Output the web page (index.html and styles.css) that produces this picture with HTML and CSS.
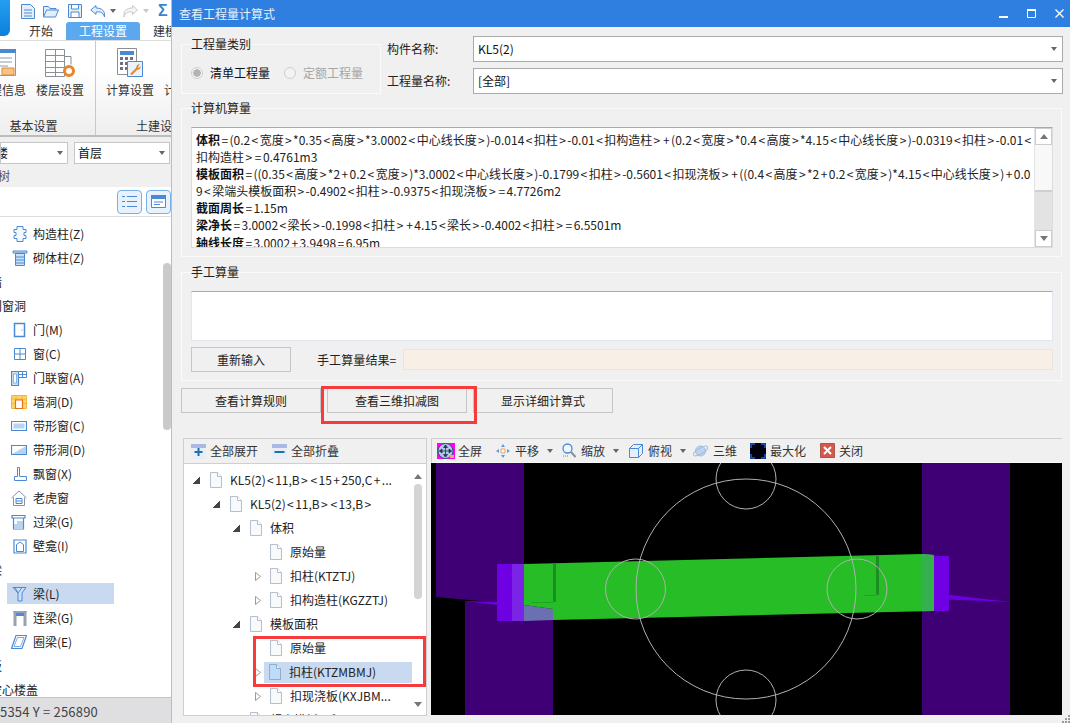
FILE: index.html
```html
<!DOCTYPE html>
<html lang="zh-CN">
<head>
<meta charset="utf-8">
<title>查看工程量计算式</title>
<link rel="stylesheet" href="styles.css">
</head>
<body>
<svg class="defs" width="0" height="0">
  <symbol id="doc" viewBox="0 0 12 16">
    <path d="M.5.5h7l4 4v11H.5z" fill="#f8f9fb" stroke="#b4bfcd"/>
    <path d="M7.5.5v4h4" fill="#fff" stroke="#b4bfcd"/>
  </symbol>
  <symbol id="docsel" viewBox="0 0 12 16">
    <path d="M.5.5h7l4 4v11H.5z" fill="#bcdcfa" stroke="#8eaed0"/>
    <path d="M7.5.5v4h4" fill="#e6f2fd" stroke="#8eaed0"/>
  </symbol>
  <symbol id="shut" viewBox="0 0 6 9">
    <path d="M.5.5 5.500 4.500.5 8.500z" fill="#fff" stroke="#9a9a9a"/>
  </symbol>
</svg>
<div class="app">
  <aside class="left">
    <div class="logo"></div>
    <div class="qat">
      <svg width="14" height="15" viewBox="0 0 14 15"><path d="M.5.5h9l4 4v10H.5z" fill="#e4effa" stroke="#4a8ad4"/><path d="M3 6h8M3 9h8M3 12h8" stroke="#4a8ad4"/></svg>
      <svg class="q1" width="16" height="14" viewBox="0 0 16 14"><path d="M.5 13V2.500h5l1.500 2h6V6M.5 13l3-7h12l-3 7z" fill="#e4effa" stroke="#4a8ad4"/></svg>
      <svg class="q2" width="14" height="14" viewBox="0 0 14 14"><path d="M.5.5h13v13H.5z" fill="#e4effa" stroke="#4a8ad4"/><path d="M3.500 1v4h7V1M3 13V8h8v5" fill="#fff" stroke="#4a8ad4"/></svg>
      <svg class="q3" width="16" height="13" viewBox="0 0 16 13"><path d="M6 .5.800 5 6 9.500V7c4-.5 7 0 8.500 5 .8-6-2.500-9-8.500-9z" fill="#e4effa" stroke="#4a8ad4"/></svg>
      <i class="caret dark q4"></i>
      <svg class="q5" width="15" height="13" viewBox="0 0 15 13"><path d="M9.500.5 14.500 5l-5 4.500V7c-4-.5-7 0-8.500 5C.2 6 3.500 3 9.500 3z" fill="#f5f5f5" stroke="#c8c8c8"/></svg>
      <i class="caret light q6"></i>
      <span class="sigma">Σ</span>
    </div>
    <div class="tabs">
      <span class="tab">开始</span>
      <span class="tab on">工程设置</span>
      <span class="tab">建模</span>
    </div>
    <div class="ribbon">
      <div class="rgroup first">
        <div class="ritems">
          <div class="ritem">
            <svg width="48" height="30" viewBox="0 0 48 30"><path d="M10.500 1.500h27v26h-27z" fill="#fff" stroke="#8a9aac"/><path d="M10 1h28v4H10z" fill="#4a8ad4"/><path d="M20 10h14M20 14h14M20 18h10" stroke="#8a9aac"/><path d="M24 20h12v7H24z" fill="#f4c48c" stroke="#e58a2c"/></svg>
            <span>工程信息</span>
          </div>
          <div class="ritem">
            <svg width="32" height="30" viewBox="0 0 32 30"><path d="M1.500 1.500h19v27h-19zM1.500 7.500h19M1.500 13.500h19M1.500 19.500h19M1.500 24.500h19M11.500 1.500v27" fill="#fff" stroke="#8a8f96"/><path d="M20 8.500h7v8" fill="none" stroke="#8a8f96"/><circle cx="25" cy="23" r="4.500" fill="#fff" stroke="#e8862a" stroke-width="3"/></svg>
            <span>楼层设置</span>
          </div>
        </div>
        <div class="rlabel">基本设置</div>
      </div>
      <div class="rgroup second">
        <div class="ritems">
          <div class="ritem">
            <svg width="26" height="30" viewBox="0 0 26 30"><path d="M.5.500h19v26H.5z" fill="#fff" stroke="#8a8f96"/><path d="M3 3h14v4H3z" fill="#4a8ad4"/><path d="M3 9h3v3H3zM8 9h3v3H8zM13 9h3v3h-3zM3 14h3v3H3zM8 14h3v3H8zM3 19h3v3H3zM8 19h3v3H8z" fill="#6c7280"/><path d="M10.500 13.500h15v15h-15z" fill="#eaf3fc" stroke="#4a8ad4"/><path d="M13 26l6-6 1-3 3-1-2 3 1 1 2-2-1 3-3 1-5 5z" fill="#e8862a"/></svg>
            <span>计算设置</span>
          </div>
          <div class="ritem"><svg width="26" height="30" viewBox="0 0 26 30"></svg><span>计算规则</span></div>
        </div>
        <div class="rlabel">土建设置</div>
      </div>
    </div>
    <div class="selects">
      <div class="lsel a"><span class="lsel-t">楼</span><i class="caret dark"></i></div>
      <div class="lsel b"><span>首层</span><i class="caret dark"></i></div>
    </div>
    <div class="treehead"><span>导航树</span></div>
    <div class="treetools">
      <span class="tbtn"><svg width="15" height="13" viewBox="0 0 15 13"><path d="M0 1.500h3M5 1.500h10M0 6.500h3M5 6.500h10M0 11.500h3M5 11.500h10" stroke="#4a8ad4"/></svg></span>
      <span class="tbtn"><svg width="15" height="13" viewBox="0 0 15 13"><path d="M.5.500h14v12H.5z" fill="#fff" stroke="#4a8ad4"/><path d="M0 0h15v4H0z" fill="#4a8ad4"/><path d="M3 7h9M3 9.500h6" stroke="#4a8ad4"/></svg></span>
    </div>
    <div class="nav">
      <div class="nav-list">
        <div class="item"><svg width="16" height="16" viewBox="0 0 16 16"><path d="M5 .5h6v3h3v3h-2v3h2v3h-3v3H5v-3H2v-3h2v-3H2v-3h3z" fill="#f4f8fd" stroke="#4a8ad4"/></svg><span>构造柱(Z)</span></div>
        <div class="item"><svg width="16" height="16" viewBox="0 0 16 16"><path d="M1 1h14v2H1zM3.500 3.500h9v12h-9z" fill="#cfe0f4" stroke="#4a8ad4"/><path d="M4 7h8M4 10h8M4 13h8" stroke="#4a8ad4"/></svg><span>砌体柱(Z)</span></div>
        <div class="group">墙</div>
        <div class="group">门窗洞</div>
        <div class="item"><svg width="16" height="16" viewBox="0 0 16 16"><path d="M1.500 1.500h10v13h-10z" transform="translate(1)" fill="#fff" stroke="#4a8ad4" stroke-width="1.500"/><path d="M9.500 7.500h1v1h-1z" fill="#4a8ad4"/></svg><span>门(M)</span></div>
        <div class="item"><svg width="16" height="16" viewBox="0 0 16 16"><path d="M2.500 2.500h11v11h-11zM8 2.500v11M2.500 8h11" fill="#fff" stroke="#4a8ad4"/></svg><span>窗(C)</span></div>
        <div class="item wide"><svg width="16" height="16" viewBox="0 0 16 16"><path d="M.5 1.500h7v14h-7z" fill="#cfe0f4" stroke="#4a8ad4" stroke-width="1.200"/><path d="M2.500 4h3v9h-3z" fill="#fff" stroke="#4a8ad4" stroke-width=".6"/><path d="M7.500 1.500h8v6h-8zM11.500 1.500v6M7.500 4.500h8" fill="#fff" stroke="#4a8ad4"/></svg><span>门联窗(A)</span></div>
        <div class="item wide"><svg width="16" height="16" viewBox="0 0 16 16"><path d="M.5 1.500h15v13H.5z" fill="#ffd56a" stroke="#f2b63c"/><path d="M.5 5h15M.5 9.500h3M12.500 9.500h3M5 1.500V5M11 1.500V5" stroke="#f2b63c"/><path d="M4.500 6h7v8.500h-7z" fill="#fff" stroke="#e5701e" stroke-width="1.200"/></svg><span>墙洞(D)</span></div>
        <div class="item wide"><svg width="16" height="16" viewBox="0 0 16 16"><path d="M.5 3.500h15v9H.5z" fill="#fff" stroke="#4a8ad4" stroke-width="1.200"/><path d="M2.500 5.500h11v5h-11z" fill="#b9d2ee"/></svg><span>带形窗(C)</span></div>
        <div class="item wide"><svg width="16" height="16" viewBox="0 0 16 16"><path d="M.5 3.500h15v9H.5z" fill="#fff" stroke="#4a8ad4" stroke-width="1.200"/><path d="M1 12 15 4v8z" fill="#b9d2ee"/></svg><span>带形洞(D)</span></div>
        <div class="item"><svg width="16" height="16" viewBox="0 0 16 16"><path d="M5.500 1.500h2v9h7v4h-12v-4h3z" fill="#fff" stroke="#4a8ad4"/></svg><span>飘窗(X)</span></div>
        <div class="item wide"><svg width="16" height="16" viewBox="0 0 16 16"><path d="M.5 8 8 1l7.500 7M2.500 7.500v8h11v-8" fill="none" stroke="#8a939d"/><path d="M5 8.500h6v5H5zM5 11h6" fill="#fff" stroke="#4a8ad4"/></svg><span>老虎窗</span></div>
        <div class="item wide"><svg width="16" height="16" viewBox="0 0 16 16"><path d="M1 1.500h13v2.500H1zM2.500 4v11h10V4" fill="#fff" stroke="#4a8ad4" stroke-width="1.200"/><path d="M3 15V10h3V7h6v8z" fill="#b9d2ee"/></svg><span>过梁(G)</span></div>
        <div class="item"><svg width="16" height="16" viewBox="0 0 16 16"><path d="M2 2h12v13H2z" fill="#fff" stroke="#4a8ad4" stroke-width="1.200"/><path d="M4.500 13.500v-7L8 4l3.500 2.500v7z" fill="#fff" stroke="#4a8ad4"/></svg><span>壁龛(I)</span></div>
        <div class="group">梁</div>
        <div class="item sel"><svg width="16" height="16" viewBox="0 0 16 16"><path d="M1 1.500h13L10 7v8H6V7z" fill="#cfe0f4" stroke="#4a8ad4"/><path d="M6 7l4-5.500M6 7 3 1.500" stroke="#4a8ad4" fill="none"/></svg><span>梁(L)</span></div>
        <div class="item"><svg width="16" height="16" viewBox="0 0 16 16"><path d="M1.500 1h3v15h-3zM11.500 1h3v15h-3z" fill="#9aa3ad"/><path d="M1.500 1h13v2h-13z" fill="#9aa3ad"/><path d="M4 3h8v3H4z" fill="#4a8ad4"/></svg><span>连梁(G)</span></div>
        <div class="item wide"><svg width="16" height="16" viewBox="0 0 16 16"><path d="M5 1.500h10.500L11 14.500H.5z" fill="#fff" stroke="#4a8ad4" stroke-width="1.200"/><path d="M6.500 3.500h6.500L9.500 12.500H3z" fill="#fff" stroke="#4a8ad4" stroke-width=".7"/></svg><span>圈梁(E)</span></div>
        <div class="group">板</div>
        <div class="group">空心楼盖</div>
      </div>
      <div class="nav-thumb"></div>
    </div>
    <div class="status">5354 Y = 256890</div>
  </aside>

  <main class="dialog">
    <header class="title">
      <span>查看工程量计算式</span>
      <div class="winbtns">
        <svg width="9" height="9" viewBox="0 0 9 9"><path d="M0 7h9v2H0z" fill="#fff"/></svg>
        <svg width="9" height="9" viewBox="0 0 9 9"><path d="M.5 1h8v7.500h-8z" fill="none" stroke="#fff"/><path d="M0 0h9v2H0z" fill="#fff"/></svg>
        <svg width="9" height="9" viewBox="0 0 9 9"><path d="M.5.500l8 8M8.500.500l-8 8" stroke="#fff" stroke-width="1.300"/></svg>
      </div>
    </header>

    <div class="row-top">
      <fieldset class="fs type">
        <legend>工程量类别</legend>
        <div class="radios">
          <i class="radio on"></i><span>清单工程量</span>
          <i class="radio off"></i><span class="muted">定额工程量</span>
        </div>
      </fieldset>
      <label class="flabel">构件名称:</label>
      <div class="combo"><span>KL5(2)</span><i class="caret dark"></i></div>
      <label class="flabel">工程量名称:</label>
      <div class="combo"><span>[全部]</span><i class="caret dark"></i></div>
    </div>

    <fieldset class="fs calc">
      <legend>计算机算量</legend>
      <div class="calc-box">
        <div class="calc-text">
          <div><b>体积</b><span class="o">=</span>(0.2<span class="o">&lt;</span>宽度<span class="o">&gt;</span>*0.35<span class="o">&lt;</span>高度<span class="o">&gt;</span>*3.0002<span class="o">&lt;</span>中心线长度<span class="o">&gt;</span>)-0.014<span class="o">&lt;</span>扣柱<span class="o">&gt;</span>-0.01<span class="o">&lt;</span>扣构造柱<span class="o">&gt;</span><span class="o">+</span>(0.2<span class="o">&lt;</span>宽度<span class="o">&gt;</span>*0.4<span class="o">&lt;</span>高度<span class="o">&gt;</span>*4.15<span class="o">&lt;</span>中心线长度<span class="o">&gt;</span>)-0.0319<span class="o">&lt;</span>扣柱<span class="o">&gt;</span>-0.01<span class="o">&lt;</span></div>
          <div>扣构造柱<span class="o">&gt;</span><span class="o">=</span>0.4761m3</div>
          <div><b>模板面积</b><span class="o">=</span>((0.35<span class="o">&lt;</span>高度<span class="o">&gt;</span>*2<span class="o">+</span>0.2<span class="o">&lt;</span>宽度<span class="o">&gt;</span>)*3.0002<span class="o">&lt;</span>中心线长度<span class="o">&gt;</span>)-0.1799<span class="o">&lt;</span>扣柱<span class="o">&gt;</span>-0.5601<span class="o">&lt;</span>扣现浇板<span class="o">&gt;</span><span class="o">+</span>((0.4<span class="o">&lt;</span>高度<span class="o">&gt;</span>*2<span class="o">+</span>0.2<span class="o">&lt;</span>宽度<span class="o">&gt;</span>)*4.15<span class="o">&lt;</span>中心线长度<span class="o">&gt;</span>)<span class="o">+</span>0.0</div>
          <div>9<span class="o">&lt;</span>梁端头模板面积<span class="o">&gt;</span>-0.4902<span class="o">&lt;</span>扣柱<span class="o">&gt;</span>-0.9375<span class="o">&lt;</span>扣现浇板<span class="o">&gt;</span><span class="o">=</span>4.7726m2</div>
          <div><b>截面周长</b><span class="o">=</span>1.15m</div>
          <div><b>梁净长</b><span class="o">=</span>3.0002<span class="o">&lt;</span>梁长<span class="o">&gt;</span>-0.1998<span class="o">&lt;</span>扣柱<span class="o">&gt;</span><span class="o">+</span>4.15<span class="o">&lt;</span>梁长<span class="o">&gt;</span>-0.4002<span class="o">&lt;</span>扣柱<span class="o">&gt;</span><span class="o">=</span>6.5501m</div>
          <div><b>轴线长度</b><span class="o">=</span>3.0002<span class="o">+</span>3.9498<span class="o">=</span>6.95m</div>
        </div>
        <div class="sb">
          <span class="sb-btn"><i class="tri up"></i></span>
          <span class="sb-thumb"></span>
          <span class="sb-track"></span>
          <span class="sb-btn"><i class="tri down"></i></span>
        </div>
      </div>
    </fieldset>

    <fieldset class="fs manual">
      <legend>手工算量</legend>
      <div class="manual-input"></div>
      <div class="manual-row">
        <button class="btn redo">重新输入</button>
        <span class="result-label">手工算量结果=</span>
        <div class="result"></div>
      </div>
    </fieldset>

    <div class="actions">
      <button class="btn act">查看计算规则</button>
      <button class="btn act">查看三维扣减图</button>
      <button class="btn act">显示详细计算式</button>
      <div class="mark mark-btn"></div>
    </div>

    <div class="lower">
      <section class="tree">
        <div class="tree-tools">
          <span class="tt"><svg width="15" height="15" viewBox="0 0 15 15"><path d="M0 0h15v15H0z" fill="#e9eef6"/><path d="M0 0h15v4H0z" fill="#a9b9e4"/><path d="M6.500 4h2v3h3v2h-3v3h-2V9h-3V7h3z" fill="#1a6fb5"/></svg>全部展开</span>
          <span class="tt"><svg width="15" height="15" viewBox="0 0 15 15"><path d="M0 0h15v15H0z" fill="#e9eef6"/><path d="M0 0h15v4H0z" fill="#a9b9e4"/><path d="M2.500 7h10v2h-10z" fill="#1a6fb5"/></svg>全部折叠</span>
        </div>
        <div class="tree-body">
          <div class="tree-list">
            <div class="node l0"><i class="ex open"></i><svg class="dic"><use href="#doc"/></svg><span>KL5(2)<span class="o">&lt;</span>11,B<span class="o">&gt;</span><span class="o">&lt;</span>15<span class="o">+</span>250,C<span class="o">+</span>...</span></div>
            <div class="node l1"><i class="ex open"></i><svg class="dic"><use href="#doc"/></svg><span>KL5(2)<span class="o">&lt;</span>11,B<span class="o">&gt;</span><span class="o">&lt;</span>13,B<span class="o">&gt;</span></span></div>
            <div class="node l2"><i class="ex open"></i><svg class="dic"><use href="#doc"/></svg><span>体积</span></div>
            <div class="node l3"><i class="ex"></i><svg class="dic"><use href="#doc"/></svg><span>原始量</span></div>
            <div class="node l3"><svg class="ex-shut"><use href="#shut"/></svg><svg class="dic"><use href="#doc"/></svg><span>扣柱(KTZTJ)</span></div>
            <div class="node l3"><svg class="ex-shut"><use href="#shut"/></svg><svg class="dic"><use href="#doc"/></svg><span>扣构造柱(KGZZTJ)</span></div>
            <div class="node l2"><i class="ex open"></i><svg class="dic"><use href="#doc"/></svg><span>模板面积</span></div>
            <div class="node l3"><i class="ex"></i><svg class="dic"><use href="#doc"/></svg><span>原始量</span></div>
            <div class="node l3"><svg class="ex-shut"><use href="#shut"/></svg><div class="picked"><svg class="dic"><use href="#docsel"/></svg><span>扣柱(KTZMBMJ)</span></div></div>
            <div class="node l3"><svg class="ex-shut"><use href="#shut"/></svg><svg class="dic"><use href="#doc"/></svg><span>扣现浇板(KXJBM...</span></div>
            <div class="node l2"><i class="ex"></i><svg class="dic"><use href="#doc"/></svg><span>超高模板面积</span></div>
          </div>
          <div class="tree-sb">
            <i class="tri up"></i>
            <span class="tree-thumb"></span>
            <i class="tri down"></i>
          </div>
          <div class="mark mark-tree"></div>
        </div>
      </section>

      <section class="view">
        <div class="view-tools">
          <span class="vt"><svg width="18" height="16" viewBox="0 0 18 16"><path d="M0 0h18v16H0z" fill="#f0f"/><circle cx="8.500" cy="8" r="7.500" fill="#b4c8e4" stroke="#2f4f7f"/><path d="M8.500 2v12M2.500 8h12M8.500 2l-2 2.500h4zM8.500 14l-2-2.500h4zM2.500 8 5 6v4zM14.500 8 12 6v4z" fill="#20355e" stroke="#20355e" stroke-width=".8"/><path d="M13 12h4v3h-4z" fill="#d8b84a"/></svg>全屏</span>
          <span class="vt g14 s5"><svg width="14" height="14" viewBox="0 0 14 14"><path d="M7 0l2 3H5zM7 14l2-3H5zM0 7l3-2v4zM14 7l-3-2v4z" fill="#5a9ce0"/><path d="M5 5h4v4H5z" fill="#fff" stroke="#f0a060"/></svg>平移<i class="caret dark c8"></i></span>
          <span class="vt g9 s5"><svg width="14" height="15" viewBox="0 0 14 15"><circle cx="5.500" cy="5.500" r="4.500" fill="#eef5fd" stroke="#4a8ad4" stroke-width="1.300"/><path d="M9 9l4.500 5" stroke="#8a8f96" stroke-width="2"/><path d="M1 13h6" stroke="#e06040" stroke-dasharray="1 1"/></svg>缩放<i class="caret dark c8"></i></span>
          <span class="vt g10 s5"><svg width="14" height="14" viewBox="0 0 14 14"><path d="M.5 4.500h9v9h-9zM.5 4.500l4-4h9v9l-4 4M9.500 4.500l4-4" fill="#e4effa" stroke="#4a8ad4"/></svg>俯视<i class="caret dark c8"></i></span>
          <span class="vt g7 s5"><svg width="15" height="14" viewBox="0 0 15 14"><circle cx="7.500" cy="7" r="5" fill="#bcd4f0" stroke="#9fbce0"/><ellipse cx="7.500" cy="7" rx="8" ry="2.800" transform="rotate(-30 7.500 7)" fill="none" stroke="#9fbce0"/></svg>三维</span>
          <span class="vt g13 s4"><svg width="16" height="16" viewBox="0 0 16 16"><path d="M0 0h16v16H0z" fill="#02020e"/><path d="M1 5V1h4M11 1h4v4M15 11v4h-4M5 15H1v-4" fill="none" stroke="#1560d8" stroke-width="1.500"/></svg>最大化</span>
          <span class="vt g14 s4"><svg width="15" height="15" viewBox="0 0 15 15"><path d="M.5.500h14v14H.5z" fill="#d9574a" stroke="#a8584c"/><path d="M4 4l7 7M11 4l-7 7" stroke="#fff" stroke-width="2"/></svg>关闭</span>
        </div>
        <svg class="scene" width="631" height="252" viewBox="431 464 631 252">
          <path class="sc-bg" d="M431 464h631v252H431z"/>
          <path class="sc-col" d="M436 464h88v142l-88-8z"/>
          <path class="sc-col" d="M465 602l59 4 29 4v106h-88z"/>
          <path class="sc-col" d="M922 464h88v252h-88z"/>
          <path class="sc-sliver" d="M465 602l32 1v3z"/>
          <path class="sc-sliver" d="M934 594l76 9-76-3z"/>
          <path class="sc-end" d="M497 565h27v57h-27z"/>
          <path class="sc-end2" d="M512 565h12v57h-12z"/>
          <path class="sc-pale" d="M524 606l29 4v11l-29 1z"/>
          <path class="sc-beam" d="M524 565l398-10 12 1v56l-381 9v-11l-29-4z"/>
          <path class="sc-dark" d="M553 565h3v38h-3zM876 557h3v39h-3z"/>
          <path class="sc-dark2" d="M531 603h22v1h-22zM864 596h12v1h-12z"/>
          <path class="sc-fade" d="M922 555l12 1v56l-12 .3z"/>
          <path class="sc-end" d="M934 557h15v55h-15z"/>
          <g class="sc-lines">
            <circle cx="746" cy="590" r="110"/>
            <circle cx="746" cy="480" r="30"/>
            <circle cx="746" cy="701" r="30"/>
            <circle cx="635.500" cy="590" r="30"/>
            <circle cx="857" cy="590" r="30"/>
          </g>
        </svg>
      </section>
    </div>
    <svg class="grip" width="8" height="8" viewBox="0 0 8 8"><path d="M6 0h2v2H6zM3 3h2v2H3zM6 3h2v2H6zM0 6h2v2H0zM3 6h2v2H3zM6 6h2v2H6z" fill="#9a9a9a"/></svg>
  </main>
</div>
</body>
</html>
```

FILE: styles.css
```css
* { box-sizing: border-box; }
html, body { margin: 0; padding: 0; height: 100%; overflow: hidden; }
body { font: 12px/16px "Noto Sans CJK SC", "Liberation Sans", sans-serif; color: #111; background: #f0f0f0; }
.defs { position: absolute; }
i { display: block; font-style: normal; }
svg { display: block; flex: none; }
.o { padding: 0 1.400px; }

.app { display: flex; width: 1070px; height: 723px; }

/* left application panel */
.left { width: 172px; height: 723px; flex: none; display: flex; flex-direction: column; overflow: hidden; background: #fff; border-right: 1px solid #bdbdbd; position: relative; }
.logo { position: absolute; left: -20px; top: -6px; width: 30px; height: 42px; border-radius: 6px; background: linear-gradient(#27a5f2, #0d7fdc); }
.qat { height: 22px; display: flex; align-items: center; padding-left: 21px; flex: none; }
.q1 { margin-left: 8px; } .q2 { margin-left: 9px; } .q3 { margin-left: 8px; } .q4 { margin-left: 4px; }
.q5 { margin-left: 7px; } .q6 { margin-left: 5px; }
.sigma { margin-left: 9px; font: 700 16px/16px "Liberation Sans", sans-serif; color: #3d83cf; }
.caret { width: 0; height: 0; border: 3px solid transparent; border-top: 4px solid #666; border-bottom: 0; flex: none; }
.caret.light { border-top-color: #c8c8c8; }
.tabs { height: 19px; display: flex; padding-left: 16px; flex: none; border-bottom: 1px solid #ddd; }
.tab { padding: 0 13px; line-height: 18px; color: #333; white-space: nowrap; flex: none; }
.tab.on { background: #5ba8ef; color: #fff; border-radius: 3px 3px 0 0; }
.ribbon { height: 96px; flex: none; display: flex; background: linear-gradient(#fff 30%, #eeeeee); border-bottom: 2px solid #bcbcbc; }
.rgroup { display: flex; flex-direction: column; flex: none; padding-top: 7px; }
.rgroup.first { width: 126px; margin-left: -30px; padding-left: 8px; border-right: 1px solid #c8c8c8; }
.rgroup.first .rlabel { margin-left: -6px; }
.rgroup.second { width: 128px; padding-left: 10px; }
.ritems { display: flex; gap: 10px; }
.ritem { width: 48px; display: flex; flex-direction: column; align-items: center; color: #333; flex: none; }
.ritem span { display: block; margin-top: 3px; line-height: 18px; white-space: nowrap; }
.rlabel { margin-top: auto; line-height: 18px; text-align: center; color: #333; white-space: nowrap; }
.rgroup.second .rlabel { margin-left: -10px; }
.selects { height: 28px; flex: none; display: flex; gap: 6px; align-items: center; background: #f0f0f0; padding-top: 4px; }
.lsel { height: 22px; display: flex; align-items: center; justify-content: space-between; background: #fff; border: 1px solid #c6c6c6; padding: 0 4px 0 3px; overflow: hidden; }
.lsel.a { width: 68px; } .lsel.b { width: 96px; }
.lsel-t { margin-left: -8px; }
.treehead { height: 22px; flex: none; background: #f0f0f0; color: #555; line-height: 22px; margin-left: -26px; padding-left: 0; }
.treetools { height: 30px; flex: none; display: flex; gap: 4px; justify-content: flex-end; align-items: center; border-bottom: 1px solid #ddd; background: #fff; }
.tbtn { width: 25px; height: 24px; display: flex; align-items: center; justify-content: center; background: #e8f2fc; border: 1px solid #7ab0e8; border-radius: 4px; }
.nav { flex: 1; position: relative; overflow: hidden; padding-top: 5px; }
.nav-list { display: flex; flex-direction: column; }
.item, .group { height: 24px; display: flex; align-items: center; white-space: nowrap; flex: none; color: #222; }
.item { padding-left: 12px; gap: 5px; }
.item.wide { padding-left: 11px; gap: 6px; }
.item.sel { position: relative; }
.item.sel::before { content: ""; position: absolute; left: 7px; width: 107px; top: 1px; bottom: 2px; background: #c8d9f0; z-index: 0; }
.item.sel > * { position: relative; z-index: 1; }
.group { margin-left: -10px; }
.nav-thumb { position: absolute; right: 0; top: 46px; width: 8px; height: 167px; border-radius: 4px; background: #cacaca; }
.status { height: 26px; flex: none; background: #dfdfe1; border-top: 1px solid #c4c4c4; line-height: 28px; color: #444; font-size: 13px; white-space: nowrap; letter-spacing: .2px; }

/* dialog */
.dialog { flex: 1; height: 723px; background: #f0f0f0; display: flex; flex-direction: column; position: relative; padding-left: 9px; }
.title { height: 27px; flex: none; margin-left: -9px; background: #2e7fe0; color: #e8f1fc; line-height: 27px; padding: 0 6px 0 7px; display: flex; justify-content: space-between; align-items: center; }
.winbtns { display: flex; gap: 19px; }
.fs { margin: 0; padding: 0; border: 1px solid #fafafa; min-width: 0; }
.fs legend { margin-left: 0; padding: 0; line-height: 16px; color: #222; height: 16px; }
.row-top { display: grid; grid-template-columns: 200px 92px 590px; grid-template-rows: 26px 26px; row-gap: 6px; margin-top: 9px; align-items: center; }
.type { grid-row: 1 / 3; height: 58px; padding-left: 9px; align-self: stretch; }
.radios { display: flex; align-items: center; margin-top: 13px; }
.radio { width: 12px; height: 12px; border-radius: 50%; border: 1px solid #cfcfcf; background: #f2f2f2; margin-right: 7px; flex: none; }
.radio.on { background: radial-gradient(circle, #b4b4b4 3.500px, #f4f4f4 4px); }
.radios span { margin-right: 14px; white-space: nowrap; }
.radios .muted { color: #a6a6a6; margin: 0; }
.flabel { padding-left: 6px; color: #222; grid-column: 2; }
.combo { grid-column: 3; height: 26px; display: flex; align-items: center; justify-content: space-between; background: #fff; border: 1px solid #aaa; padding: 0 5px 0 4px; }
.calc { width: 881px; height: 157px; margin-top: 6px; padding: 11px 8px 9px 9px; }
.calc-box { height: 121px; display: flex; background: #fff; border: 1px solid #dcdcdc; border-top-color: #aaa; overflow: hidden; }
.calc-text { flex: 1; padding: 3px 0 0 4px; line-height: 17.100px; white-space: nowrap; color: #222; overflow: hidden; }
.calc-text b { font-weight: 700; color: #111; }
.sb { width: 18px; flex: none; display: flex; flex-direction: column; border-left: 1px solid #e4e4e4; background: #f8f8f8; }
.sb-btn { height: 17px; flex: none; display: flex; align-items: center; justify-content: center; background: #fff; border: 1px solid #cdcdcd; }
.sb-thumb { height: 47px; flex: none; background: #f8f8f8; border-bottom: 2px solid #cfcfcf; }
.sb-track { flex: 1; background: #e3e3e3; }
.tri { width: 0; height: 0; border: 4px solid transparent; flex: none; }
.tri.up { border-top: 0; border-bottom: 5px solid #777; }
.tri.down { border-bottom: 0; border-top: 5px solid #777; }
.manual { width: 881px; height: 117px; margin-top: 7px; padding: 11px 8px 0 9px; }
.manual-input { height: 50px; background: #fff; border: 1px solid #e2e6ee; border-top-color: #aaa; }
.manual-row { display: flex; align-items: center; margin-top: 6px; height: 25px; }
.btn { font: inherit; color: #222; background: #f0f0f0; border: 1px solid #c6c6c6; padding: 0; }
.redo { width: 100px; height: 25px; flex: none; }
.result-label { margin-left: 26px; width: 86px; flex: none; color: #222; letter-spacing: .1px; }
.result { flex: 1; height: 21px; background: #f8efe6; border: 1px solid #eae5de; }
.actions { display: flex; gap: 6px; margin-top: 7px; position: relative; height: 25px; flex: none; }
.act { width: 140px; height: 25px; }
.mark { position: absolute; border: 3px solid #f53b3b; pointer-events: none; }
.mark-btn { left: 140px; top: -2px; width: 156px; height: 38px; }
.lower { display: flex; gap: 4px; margin-top: 25px; margin-left: 2px; height: 278px; flex: none; }
.tree { width: 244px; flex: none; display: flex; flex-direction: column; border: 1px solid #cfcfcf; background: #fff; }
.tree-tools { height: 25px; flex: none; background: #f0f0f0; display: flex; align-items: center; padding-left: 7px; gap: 14px; border-bottom: 1px solid #cfcfcf; }
.tt { display: flex; align-items: center; gap: 4px; color: #333; }
.tree-body { flex: 1; display: flex; position: relative; overflow: hidden; }
.tree-list { flex: 1; padding-top: 4px; overflow: hidden; min-width: 0; }
.node { height: 24px; display: flex; align-items: center; white-space: nowrap; color: #222; }
.node.l0 { padding-left: 9px; } .node.l1 { padding-left: 29px; } .node.l2 { padding-left: 49px; } .node.l3 { padding-left: 71px; }
.ex { width: 8px; height: 8px; flex: none; margin-right: 9px; }
.l3 .ex { width: 6px; margin-right: 9px; }
.ex.open { background: linear-gradient(135deg, transparent 49%, #444 50%); width: 7px; height: 7px; margin-right: 10px; }
.ex-shut { width: 6px; height: 9px; margin-right: 9px; }
.dic { width: 12px; height: 16px; margin-right: 8px; flex: none; }
.picked { display: flex; align-items: center; width: 148px; height: 21px; margin-left: -6px; padding-left: 5px; background: #c8d9f0; flex: none; }
.tree-sb { width: 14px; flex: none; display: flex; flex-direction: column; align-items: center; padding: 10px 2px 8px 0; }
.tree-thumb { width: 8px; height: 115px; margin-top: 5px; border-radius: 4px; background: #d4d4d4; flex: none; }
.tree-sb .tri.down { margin-top: auto; }
.mark-tree { left: 69px; top: 172px; width: 173px; height: 51px; }
.view { width: 631px; flex: none; display: flex; flex-direction: column; }
.view-tools { height: 25px; flex: none; display: flex; align-items: center; padding-left: 5px; background: #f0f0f0; border: 1px solid #cfcfcf; border-bottom: 1px solid #f8f8f8; border-right: 0; }
.vt { display: flex; align-items: center; gap: 3px; color: #333; white-space: nowrap; }
.s5 { gap: 5px; } .s4 { gap: 4px; }
.g7 { margin-left: 7px; } .g9 { margin-left: 9px; } .g10 { margin-left: 10px; } .g13 { margin-left: 13px; } .g14 { margin-left: 14px; }
.c8 { margin-left: 3px; }
.scene { flex: none; }
.sc-bg { fill: #000; }
.sc-col { fill: #3f0076; }
.sc-sliver { fill: #6a00dc; }
.sc-end { fill: #7000e4; }
.sc-end2 { fill: #7a25e6; }
.sc-pale { fill: #6a70b0; }
.sc-beam { fill: #27bd27; }
.sc-dark { fill: #1a8f22; }
.sc-dark2 { fill: #1fa525; }
.sc-fade { fill: #35b04e; }
.sc-lines circle { fill: none; stroke: #b0b0b0; stroke-width: 1; }
.grip { position: absolute; right: 0; bottom: 0; }
```
